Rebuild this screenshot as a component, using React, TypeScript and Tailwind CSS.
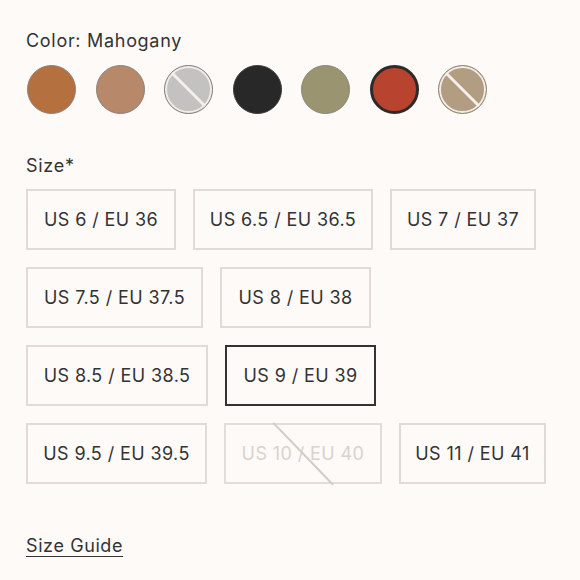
import React from "react"

// swatches: fill colour, border, and whether sold out / selected
const swatches = [
  { name: "Cognac", fill: "bg-[#b5703f]", ring: "border-[#8f7f75]" },
  { name: "Taupe", fill: "bg-[#b8886a]", ring: "border-[#8f8079]" },
  { name: "Grey", fill: "bg-[#c3c2c0]", ring: "border-[#7f7b79]", soldOut: true },
  { name: "Black", fill: "bg-[#272827]", ring: "border-[#3a3b3a]" },
  { name: "Olive", fill: "bg-[#9a9471]", ring: "border-[#8b8676]" },
  { name: "Mahogany", fill: "bg-[#b8432f]", ring: "border-[#2e2a29]", selected: true },
  { name: "Sand", fill: "bg-[#b29c82]", ring: "border-[#8f8579]", soldOut: true },
]

const sizes = [
  { label: "US 6 / EU 36", w: "w-[150px]" },
  { label: "US 6.5 / EU 36.5", w: "w-[180px]" },
  { label: "US 7 / EU 37", w: "w-[146px]" },
  { label: "US 7.5 / EU 37.5", w: "w-[177px]" },
  { label: "US 8 / EU 38", w: "w-[151px]" },
  { label: "US 8.5 / EU 38.5", w: "w-[182px]" },
  { label: "US 9 / EU 39", w: "w-[151px]", selected: true },
  { label: "US 9.5 / EU 39.5", w: "w-[181px]" },
  { label: "US 10 / EU 40", w: "w-[158px]", soldOut: true },
  { label: "US 11 / EU 41", w: "w-[147px]" },
]

export default function App() {
  return (
    <div className="min-h-[580px] w-[580px] bg-[#fdfaf8] px-[26px] pt-[29px] text-[#333333] font-['Inter','Liberation_Sans',sans-serif]">
      <p className="text-[18px] leading-[24px] tracking-[0.7px]">Color: Mahogany</p>

      {/* Colour swatches */}
      <div className="mt-[12px] flex gap-[19.5px] pl-px">
        {swatches.map((s) => (
          <button
            key={s.name}
            title={s.name}
            className={`relative h-[49px] w-[49px] overflow-hidden rounded-full ${s.fill} ${s.ring} ${
              s.selected ? "border-[3px]" : "border-[1.5px]"
            }`}
          >
            {s.soldOut && (
              <>
                <span className="absolute inset-0 rounded-full border-2 border-[#f1ece6]" />
                <span className="absolute left-1/2 top-1/2 h-[3px] w-[60px] -translate-x-1/2 -translate-y-1/2 rotate-45 bg-[#f4efe9]" />
              </>
            )}
          </button>
        ))}
      </div>

      <p className="mt-[40px] text-[18px] leading-[24px] tracking-[0.7px]">Size*</p>

      {/* Size options */}
      <div className="mt-[11px] flex flex-wrap gap-x-[17px] gap-y-[17px]">
        {sizes.map((s) => (
          <button
            key={s.label}
            className={`relative flex h-[61px] ${s.w} items-center justify-center border-2 text-[18px] tracking-[0.4px] ${
              s.selected
                ? "border-[#333333] text-[#333333]"
                : s.soldOut
                ? "border-[#e2ddd8] text-[#d8d3ce]"
                : "border-[#e0dbd6] text-[#333333]"
            }`}
          >
            {s.label}
            {s.soldOut && (
              <span className="absolute left-1/2 top-1/2 h-[86px] w-[1.5px] -translate-x-1/2 -translate-y-1/2 -rotate-[44deg] bg-[#d2ccc6]" />
            )}
          </button>
        ))}
      </div>

      <a href="#" className="mt-[50px] inline-block text-[18px] leading-[24px] tracking-[0.6px] underline underline-offset-[4px]">
        Size Guide
      </a>
    </div>
  )
}
